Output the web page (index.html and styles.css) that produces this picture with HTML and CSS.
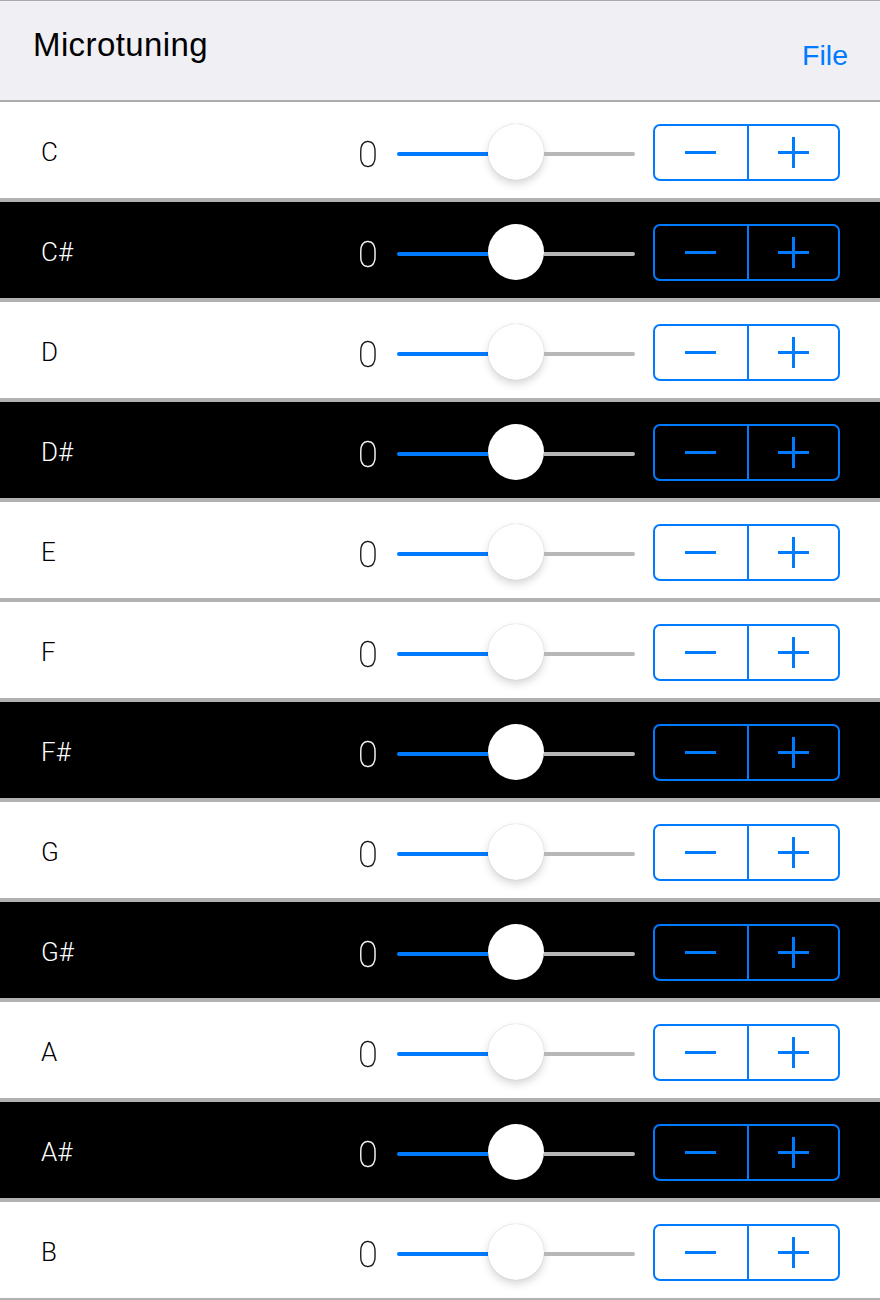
FILE: index.html
```html
<!DOCTYPE html>
<html>
<head>
<meta charset="utf-8">
<title>Microtuning</title>
<link rel="stylesheet" href="styles.css">
</head>
<body>
<header class="topbar">
  <h1 class="title">Microtuning</h1>
  <span class="file">File</span>
</header>
<main class="list">
  <div class="row light"><span class="note">C</span><span class="value">0</span><div class="slider"><span class="fill"></span><span class="thumb"></span><span class="rest"></span></div><div class="stepper"><span class="half"><svg width="31" height="31" viewBox="0 0 31 31"><path d="M0 15.5H31" stroke="#007aff" stroke-width="3"/></svg></span><span class="half plus"><svg width="31" height="31" viewBox="0 0 31 31"><path d="M0 15.5H31M15.5 0V31" stroke="#007aff" stroke-width="3"/></svg></span></div></div>
  <div class="row dark"><span class="note">C#</span><span class="value">0</span><div class="slider"><span class="fill"></span><span class="thumb"></span><span class="rest"></span></div><div class="stepper"><span class="half"><svg width="31" height="31" viewBox="0 0 31 31"><path d="M0 15.5H31" stroke="#007aff" stroke-width="3"/></svg></span><span class="half plus"><svg width="31" height="31" viewBox="0 0 31 31"><path d="M0 15.5H31M15.5 0V31" stroke="#007aff" stroke-width="3"/></svg></span></div></div>
  <div class="row light"><span class="note">D</span><span class="value">0</span><div class="slider"><span class="fill"></span><span class="thumb"></span><span class="rest"></span></div><div class="stepper"><span class="half"><svg width="31" height="31" viewBox="0 0 31 31"><path d="M0 15.5H31" stroke="#007aff" stroke-width="3"/></svg></span><span class="half plus"><svg width="31" height="31" viewBox="0 0 31 31"><path d="M0 15.5H31M15.5 0V31" stroke="#007aff" stroke-width="3"/></svg></span></div></div>
  <div class="row dark"><span class="note">D#</span><span class="value">0</span><div class="slider"><span class="fill"></span><span class="thumb"></span><span class="rest"></span></div><div class="stepper"><span class="half"><svg width="31" height="31" viewBox="0 0 31 31"><path d="M0 15.5H31" stroke="#007aff" stroke-width="3"/></svg></span><span class="half plus"><svg width="31" height="31" viewBox="0 0 31 31"><path d="M0 15.5H31M15.5 0V31" stroke="#007aff" stroke-width="3"/></svg></span></div></div>
  <div class="row light"><span class="note">E</span><span class="value">0</span><div class="slider"><span class="fill"></span><span class="thumb"></span><span class="rest"></span></div><div class="stepper"><span class="half"><svg width="31" height="31" viewBox="0 0 31 31"><path d="M0 15.5H31" stroke="#007aff" stroke-width="3"/></svg></span><span class="half plus"><svg width="31" height="31" viewBox="0 0 31 31"><path d="M0 15.5H31M15.5 0V31" stroke="#007aff" stroke-width="3"/></svg></span></div></div>
  <div class="row light"><span class="note">F</span><span class="value">0</span><div class="slider"><span class="fill"></span><span class="thumb"></span><span class="rest"></span></div><div class="stepper"><span class="half"><svg width="31" height="31" viewBox="0 0 31 31"><path d="M0 15.5H31" stroke="#007aff" stroke-width="3"/></svg></span><span class="half plus"><svg width="31" height="31" viewBox="0 0 31 31"><path d="M0 15.5H31M15.5 0V31" stroke="#007aff" stroke-width="3"/></svg></span></div></div>
  <div class="row dark"><span class="note">F#</span><span class="value">0</span><div class="slider"><span class="fill"></span><span class="thumb"></span><span class="rest"></span></div><div class="stepper"><span class="half"><svg width="31" height="31" viewBox="0 0 31 31"><path d="M0 15.5H31" stroke="#007aff" stroke-width="3"/></svg></span><span class="half plus"><svg width="31" height="31" viewBox="0 0 31 31"><path d="M0 15.5H31M15.5 0V31" stroke="#007aff" stroke-width="3"/></svg></span></div></div>
  <div class="row light"><span class="note">G</span><span class="value">0</span><div class="slider"><span class="fill"></span><span class="thumb"></span><span class="rest"></span></div><div class="stepper"><span class="half"><svg width="31" height="31" viewBox="0 0 31 31"><path d="M0 15.5H31" stroke="#007aff" stroke-width="3"/></svg></span><span class="half plus"><svg width="31" height="31" viewBox="0 0 31 31"><path d="M0 15.5H31M15.5 0V31" stroke="#007aff" stroke-width="3"/></svg></span></div></div>
  <div class="row dark"><span class="note">G#</span><span class="value">0</span><div class="slider"><span class="fill"></span><span class="thumb"></span><span class="rest"></span></div><div class="stepper"><span class="half"><svg width="31" height="31" viewBox="0 0 31 31"><path d="M0 15.5H31" stroke="#007aff" stroke-width="3"/></svg></span><span class="half plus"><svg width="31" height="31" viewBox="0 0 31 31"><path d="M0 15.5H31M15.5 0V31" stroke="#007aff" stroke-width="3"/></svg></span></div></div>
  <div class="row light"><span class="note">A</span><span class="value">0</span><div class="slider"><span class="fill"></span><span class="thumb"></span><span class="rest"></span></div><div class="stepper"><span class="half"><svg width="31" height="31" viewBox="0 0 31 31"><path d="M0 15.5H31" stroke="#007aff" stroke-width="3"/></svg></span><span class="half plus"><svg width="31" height="31" viewBox="0 0 31 31"><path d="M0 15.5H31M15.5 0V31" stroke="#007aff" stroke-width="3"/></svg></span></div></div>
  <div class="row dark"><span class="note">A#</span><span class="value">0</span><div class="slider"><span class="fill"></span><span class="thumb"></span><span class="rest"></span></div><div class="stepper"><span class="half"><svg width="31" height="31" viewBox="0 0 31 31"><path d="M0 15.5H31" stroke="#007aff" stroke-width="3"/></svg></span><span class="half plus"><svg width="31" height="31" viewBox="0 0 31 31"><path d="M0 15.5H31M15.5 0V31" stroke="#007aff" stroke-width="3"/></svg></span></div></div>
  <div class="row light"><span class="note">B</span><span class="value">0</span><div class="slider"><span class="fill"></span><span class="thumb"></span><span class="rest"></span></div><div class="stepper"><span class="half"><svg width="31" height="31" viewBox="0 0 31 31"><path d="M0 15.5H31" stroke="#007aff" stroke-width="3"/></svg></span><span class="half plus"><svg width="31" height="31" viewBox="0 0 31 31"><path d="M0 15.5H31M15.5 0V31" stroke="#007aff" stroke-width="3"/></svg></span></div></div>
</main>
</body>
</html>
```

FILE: styles.css
```css
* { box-sizing: border-box; }

html, body {
  margin: 0;
  padding: 0;
  background: #ffffff;
  font-family: "Liberation Sans", Arial, sans-serif;
  overflow: hidden;
}

.topbar {
  display: flex;
  justify-content: space-between;
  align-items: flex-start;
  height: 102px;
  padding: 0 32px 0 33px;
  background: #efeff4;
  border-top: 1px solid #a9a9a9;
  border-bottom: 2px solid #acacac;
}

.title {
  margin: 24px 0 0;
  font-size: 33px;
  line-height: 40px;
  font-weight: normal;
  letter-spacing: 0.4px;
  color: #000;
}

.file {
  margin-top: 37px;
  font-size: 28.5px;
  line-height: 34px;
  color: #007aff;
}

.list {
  display: flex;
  flex-direction: column;
}

.row {
  display: flex;
  align-items: center;
  height: 100px;
  padding: 4px 40px 0 41px;
  border-bottom: 4px solid #b1b1b1;
}

.row.light { background: #ffffff; color: #000; }
.row.dark { background: #000000; color: #fff; }

.note {
  flex: 1;
  font-family: Roboto, "Liberation Sans", sans-serif;
  font-weight: 300;
  font-size: 26px;
  line-height: 26px;
}

.value {
  margin-top: 5px;
  margin-right: 19px;
  font-family: Roboto, "Liberation Sans", sans-serif;
  font-weight: 100;
  font-size: 36px;
  line-height: 36px;
  will-change: transform;
  -webkit-text-stroke: 0.3px currentColor;
}

.light .value { color: #000; }
.dark .value { color: #fff; }

.slider {
  display: flex;
  align-items: center;
  width: 238px;
  height: 56px;
  margin-right: 18px;
}

.fill, .rest {
  flex: 1;
  height: 4px;
  margin-top: 3px;
}

.fill {
  background: #007aff;
  border-radius: 2px 0 0 2px;
}

.rest {
  background: #b7b7b7;
  border-radius: 0 2px 2px 0;
}

.thumb {
  width: 56px;
  height: 56px;
  border-radius: 50%;
  background: #ffffff;
  flex: none;
}

.light .thumb {
  box-shadow: 0 4px 8px rgba(0, 0, 0, 0.16), 0 0 1px rgba(0, 0, 0, 0.25);
}

.stepper {
  display: grid;
  grid-template-columns: 1fr 1fr;
  width: 187px;
  height: 57px;
  border: 2px solid #007aff;
  border-radius: 7px;
  margin-top: 1px;
}

.half {
  display: flex;
  align-items: center;
  justify-content: center;
}

.half.plus {
  border-left: 2px solid #007aff;
}

.half svg { display: block; }
```
